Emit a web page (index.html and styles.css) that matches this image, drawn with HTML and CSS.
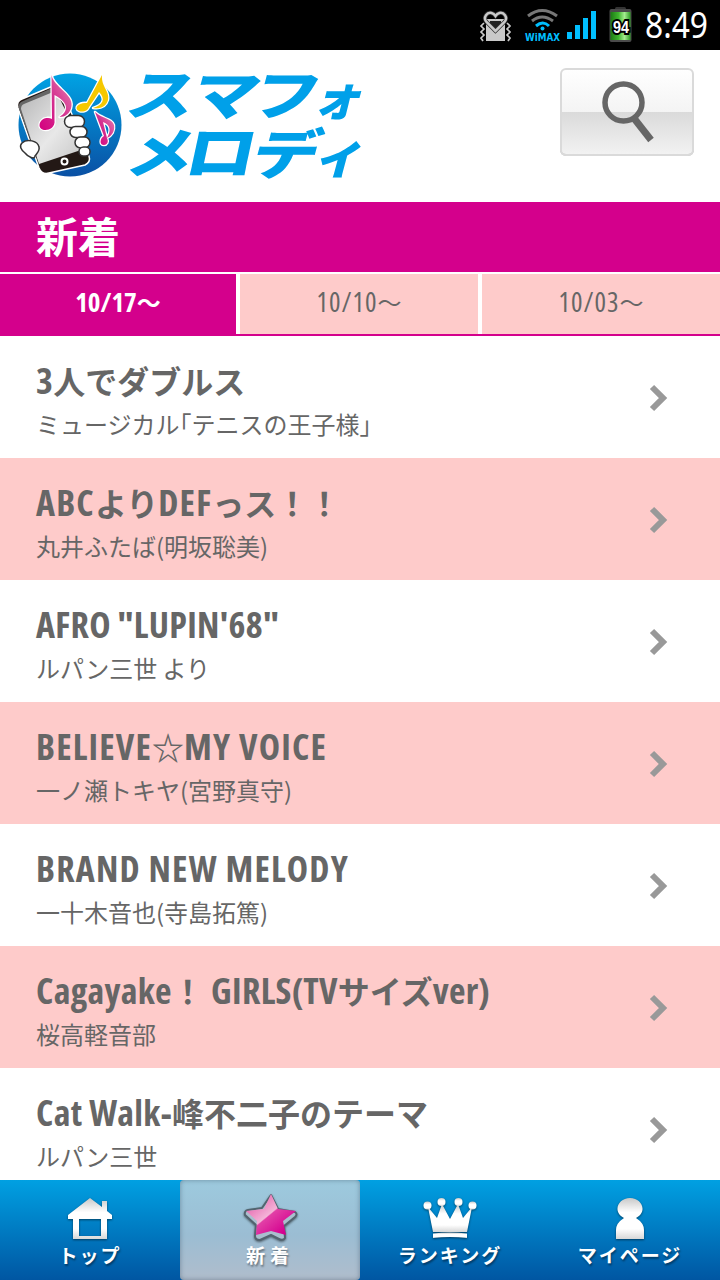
FILE: index.html
```
<!DOCTYPE html>
<html lang="ja">
<head>
  <meta charset="UTF-8" />
  <meta name="viewport" content="width=device-width, initial-scale=1.0" />
  <title>スマフォメロディ</title>
  <link rel="stylesheet" href="styles.css">
</head>
<body>
  <div class="status-bar">
    <svg width="250" height="50" viewBox="470 0 250 50">
      <!-- マナーモード -->
      <g fill="none" stroke="#c9c9c9" stroke-width="2">
        <path d="M487 19v21h17V19" fill="#c9c9c9"/>
        <path d="M490 21h11v7h-11z" fill="#222" stroke="none"/>
        <path d="M495.500 31l-9-9c-4-5 1-10 5-9 2 .5 3 1.500 4 3 1-1.500 2-2.500 4-3 4-1 9 4 5 9z" stroke="#333" stroke-width="4"/>
        <path d="M495.500 31l-9-9c-4-5 1-10 5-9 2 .5 3 1.500 4 3 1-1.500 2-2.500 4-3 4-1 9 4 5 9z" stroke-width="2.500"/>
        <path d="M484 23l-3 3 3 3-3 3 3 3-3 3 2 3M507 23l3 3-3 3 3 3-3 3 3 3-2 3" stroke-width="1.700"/>
      </g>
      <!-- WiMAX -->
      <g fill="none" stroke-width="3">
        <path d="M528 16q14-11 29 0M532 21q10-8 21 0" stroke="#777"/>
        <path d="M536 26q7-6 13 0" stroke="#00bfff"/>
        <circle cx="542.500" cy="28.500" r="2" fill="#00bfff" stroke="none"/>
      </g>
      <text class="wimax" x="525" y="41" textLength="35" lengthAdjust="spacingAndGlyphs">WiMAX</text>
      <path d="M567 32h5v7h-5zM575 25h5v14h-5zM583 18h5v21h-5zM591 11h5v28h-5z" fill="#00bfff"/>
      <!-- 電池 -->
      <defs>
        <linearGradient id="cell">
          <stop offset="0" stop-color="#1c7a14"/>
          <stop offset=".4" stop-color="#3fb52e"/>
          <stop offset=".7" stop-color="#a5ec90"/>
          <stop offset="1" stop-color="#2d9a22"/>
        </linearGradient>
      </defs>
      <rect x="615" y="7" width="11" height="4" rx="1.500" fill="#333"/>
      <rect x="609.500" y="9" width="22" height="33" rx="2" fill="#4a4a4a"/>
      <rect x="610.500" y="12" width="20" height="28" fill="url(#cell)"/>
      <text class="battery" x="613" y="32.500" textLength="16" lengthAdjust="spacingAndGlyphs">94</text>
      <text class="clock" x="645" y="38" textLength="63" lengthAdjust="spacingAndGlyphs">8:49</text>
    </svg>
  </div>

  <header class="header">
    <svg width="420" height="152" viewBox="0 50 420 152">
      <defs>
        <linearGradient id="globe" x1="0" y1="0" x2="0" y2="1">
          <stop offset="0" stop-color="#00a3e4"/>
          <stop offset="1" stop-color="#0a50a4"/>
        </linearGradient>
        <linearGradient id="screen" x1="0" y1="0" x2="1" y2="1">
          <stop offset="0" stop-color="#b5b5b6"/>
          <stop offset=".55" stop-color="#e8e8e8"/>
          <stop offset="1" stop-color="#c4c4c4"/>
        </linearGradient>
        <linearGradient id="note" x1="0" y1="1" x2="1" y2="0">
          <stop offset="0" stop-color="#d4007f"/>
          <stop offset=".5" stop-color="#d4308f"/>
          <stop offset="1" stop-color="#e889b5"/>
        </linearGradient>
      </defs>
      <circle cx="70" cy="125" r="51.500" fill="url(#globe)"/>
      <path d="M22 99l31-13q6-2 9 4l27 66q2 6-4 9l-36 8q-7 2-10-5L18 108q-2-7 4-9z" fill="#231815" stroke="#fff" stroke-width="1.500"/>
      <path d="M21 102l31-14q6-1 8 4L38 160 19 109q-1-5 2-7z" fill="#666"/>
      <path d="M24 104l29-12q3-1 5 3l26 54-45 15-18-55q0-4 3-5z" fill="url(#screen)"/>
      <circle cx="64.500" cy="161.500" r="3" fill="#231815" stroke="#fff" stroke-width="2"/>
      <g fill="#fff" stroke="#333" stroke-width="1.500">
        <path d="M22 143c5-5 16-2 17 4 1 4-2 6-4 9 0 4-7 1-10-3-4-3-6-7-3-10z"/>
        <rect x="64.500" y="115.500" width="20" height="12" rx="6"/>
        <rect x="70" y="126.500" width="17" height="11" rx="5.500"/>
        <rect x="75" y="137" width="15" height="11" rx="5.500"/>
        <rect x="79" y="147" width="11" height="9" rx="4.500"/>
      </g>
      <g stroke="#fff" stroke-width="2.500" stroke-linejoin="round" paint-order="stroke" fill-rule="evenodd">
        <path d="M51.500 75c2 12 22 19 20 31-1 8-7 11-12 11 9-6 10-14-5-22v25c1 7-5 10-9 10-9 0-7-11 1-12q3-.5 5.500 1z" fill="url(#note)"/>
        <path d="M102 75c-1 12 8 16 6 25-2 7-8 9-15 8 10-3 13-9 6-16l-10 15c-2 5-7 5-10 4-6-3 0-9 8-8z" fill="#f5c800"/>
        <path d="M95 112c7 7 17 6 19 13 1 6-2 11-7 13 4-7 4-13-4-16l4 16c2 4 0 7-3 7-5 0-4-7 0-9z" fill="url(#note)"/>
      </g>
      <g class="logo-text">
        <text transform="translate(123.500 114.500) skewX(-15) scale(1.240 1)">ス</text>
        <text transform="translate(187 115) skewX(-15) scale(1.240 1)">マ</text>
        <text transform="translate(248 115) skewX(-15) scale(1.240 1)">フ</text>
        <text transform="translate(311 114.500) skewX(-15) scale(.93 .9)">ォ</text>
        <text transform="translate(123 173) skewX(-15) scale(1.240 1)">メ</text>
        <text transform="translate(182 173.500) skewX(-12) scale(1.300 1.080)">ロ</text>
        <text transform="translate(248 173.500) skewX(-15) scale(1.240 1)">デ</text>
        <text transform="translate(312 173) skewX(-15) scale(.93 .9)">ィ</text>
      </g>
    </svg>
    <button class="search">
      <svg width="134" height="88" viewBox="560 68 134 88">
        <circle cx="623.500" cy="102.500" r="18.500" fill="none" stroke="#666" stroke-width="5.500"/>
        <path d="M633 117l18 23" stroke="#666" stroke-width="7"/>
      </svg>
    </button>
  </header>

  <h1 class="heading">新着</h1>

  <div class="tabs">
    <a class="tab active"><span>10/17</span>～</a>
    <a class="tab"><span>10/10</span>～</a>
    <a class="tab"><span>10/03</span>～</a>
  </div>

  <ul class="list">
    <li>
      <h2><span class="en">3</span>人でダブルス</h2>
      <p>ミュージカル｢テニスの王子様｣</p>
      <svg class="arrow" viewBox="0 0 20 28"><path d="M3 3l11 11L3 25"/></svg>
    </li>
    <li>
      <h2><span class="en wide">ABC</span>より<span class="en wide">DEF</span>っス！！</h2>
      <p>丸井ふたば(明坂聡美)</p>
      <svg class="arrow" viewBox="0 0 20 28"><path d="M3 3l11 11L3 25"/></svg>
    </li>
    <li>
      <h2><span class="en">AFRO "LUPIN'68"</span></h2>
      <p>ルパン三世 より</p>
      <svg class="arrow" viewBox="0 0 20 28"><path d="M3 3l11 11L3 25"/></svg>
    </li>
    <li>
      <h2><span class="en wide">BELIEVE</span>☆<span class="en wide">MY VOICE</span></h2>
      <p>一ノ瀬トキヤ(宮野真守)</p>
      <svg class="arrow" viewBox="0 0 20 28"><path d="M3 3l11 11L3 25"/></svg>
    </li>
    <li>
      <h2><span class="en wide">BRAND NEW MELODY</span></h2>
      <p>一十木音也(寺島拓篤)</p>
      <svg class="arrow" viewBox="0 0 20 28"><path d="M3 3l11 11L3 25"/></svg>
    </li>
    <li>
      <h2><span class="en">Cagayake</span>！ <span class="en">GIRLS(TV</span>サイズ<span class="en">ver)</span></h2>
      <p>桜高軽音部</p>
      <svg class="arrow" viewBox="0 0 20 28"><path d="M3 3l11 11L3 25"/></svg>
    </li>
    <li>
      <h2><span class="en">Cat Walk-</span>峰不二子のテーマ</h2>
      <p>ルパン三世</p>
      <svg class="arrow" viewBox="0 0 20 28"><path d="M3 3l11 11L3 25"/></svg>
    </li>
  </ul>

  <nav class="nav">
    <svg class="defs" width="0" height="0">
      <linearGradient id="silver" x1="0" y1="0" x2="0" y2="1">
        <stop offset="0" stop-color="#c8c8c8"/>
        <stop offset=".35" stop-color="#fff"/>
        <stop offset=".75" stop-color="#fff"/>
        <stop offset="1" stop-color="#d8d8d8"/>
      </linearGradient>
      <linearGradient id="pink" x1="0" y1="0" x2="1" y2="1">
        <stop offset=".1" stop-color="#e45aa8"/>
        <stop offset=".48" stop-color="#f4b4d8"/>
        <stop offset=".5" stop-color="#e23fa6"/>
        <stop offset=".85" stop-color="#d4008f"/>
      </linearGradient>
    </svg>
    <a>
      <svg class="icon" viewBox="0 0 60 48"><path d="M30 4L8 21v4h5v20h34V25h5v-4l-5-4V7h-5v6zM19 25h22v17H19z" fill="url(#silver)" fill-rule="evenodd"/></svg>
      <span>トップ</span>
    </a>
    <a class="current">
      <svg class="icon" viewBox="0 0 60 48">
        <path d="M31 1l7 14 17 3q3 2 0 5l-11 9 1 12q-2 3-6 1l-8-4-11 5q-5 0-5-4l1-11L5 21q-1-4 3-5l14-2z" fill="#a9bfce" stroke="#52646f" stroke-width="2" stroke-linejoin="round"/>
        <path d="M31 0l7 15 18 2-13 10 3 14-15-4-15 4 1-14L6 17l18-2z" fill="url(#pink)"/>
      </svg>
      <span>新着</span>
    </a>
    <a>
      <svg class="icon" viewBox="0 0 60 48">
        <g fill="url(#silver)">
          <path d="M8 13l9 11 5-14 8 15 8-15 5 14 9-11-5 25H13z"/>
          <circle cx="7.500" cy="11.500" r="4"/><circle cx="21.500" cy="8" r="4"/><circle cx="38.500" cy="8" r="4"/><circle cx="52.500" cy="11.500" r="4"/>
          <path d="M13 39.500q17-2 34 0V44q-17-2-34 0z"/>
        </g>
      </svg>
      <span>ランキング</span>
    </a>
    <a>
      <svg class="icon" viewBox="0 0 60 48"><path d="M24 24C12 18 18 4 30 4s18 14 6 20q8 5 8 12v9H16v-9q0-7 8-12z" fill="url(#silver)"/></svg>
      <span>マイページ</span>
    </a>
  </nav>
</body>
</html>
```
FILE: styles.css
```
* {
  box-sizing: border-box;
}

body {
  margin: 0;
  height: 1280px;
  display: flex;
  flex-direction: column;
  overflow: hidden;
  background: #fff;
  color: #666;
  font-family: "Noto Sans CJK JP", sans-serif;
}

svg {
  display: block;
}

.status-bar {
  flex: none;
  height: 50px;
  background: #000;
  display: flex;
  justify-content: flex-end;
}

.wimax {
  font: bold 11px "DejaVu Sans", sans-serif;
  fill: #00bfff;
}

.battery {
  font: bold 17px "Liberation Sans", sans-serif;
  fill: #fff;
  stroke: #000;
  stroke-width: 4px;
  paint-order: stroke;
}

.clock {
  font: 36px "Noto Sans", sans-serif;
  fill: #fff;
}

.header {
  flex: none;
  height: 152px;
  display: flex;
  justify-content: space-between;
  padding-right: 26px;
}

.logo-text {
  font-size: 54px;
  font-weight: 900;
  fill: #00a0e9;
}

.search {
  width: 134px;
  height: 88px;
  margin: 18px 0 0;
  padding: 0;
  border: 0;
  border-radius: 6px;
  box-shadow: inset 0 0 0 2px #dadada, inset 0 -2px 0 #c8c8c8;
  background: linear-gradient(#fff, #f4f4f4 50%, #dadada 50%, #f3f3f3);
}

.heading {
  flex: none;
  height: 70px;
  margin: 0 0 2px;
  padding-left: 36px;
  background: #d4008c;
  color: #fff;
  font-size: 42px;
  font-weight: 700;
  line-height: 66px;
}

.tabs {
  flex: none;
  height: 62px;
  display: grid;
  grid-template-columns: 236px 238px 238px;
  gap: 4px;
  border-bottom: 2px solid #d4008c;
}

.tab {
  background: #fecbca;
  font-size: 24px;
  line-height: 56px;
  text-align: center;
  white-space: nowrap;
}

.tab span {
  font-family: "Open Sans", sans-serif;
  font-size: 27px;
  font-stretch: 75%;
  letter-spacing: 1px;
}

.tab.active {
  background: #d4008c;
  color: #fff;
  font-weight: 700;
}

.tab.active span {
  letter-spacing: 0;
}

.list {
  flex: 1;
  min-height: 0;
  margin: 0;
  padding: 0;
  list-style: none;
  overflow: hidden;
}

.list li {
  position: relative;
  height: 122px;
  padding: 20px 0 0 36px;
}

.list li:nth-child(even) {
  background: #fecbca;
}

.list h2 {
  margin: 0;
  height: 50px;
  font-size: 32px;
  font-weight: 700;
  line-height: 48px;
  white-space: nowrap;
}

.list .en {
  font-family: "Open Sans", sans-serif;
  font-size: 36px;
  font-weight: 700;
  font-stretch: 75%;
  letter-spacing: 0.3px;
}

.list .wide {
  letter-spacing: 1.2px;
}

.list p {
  margin: 0;
  font-size: 24px;
  line-height: 35px;
}

.arrow {
  position: absolute;
  top: 48px;
  right: 51px;
  width: 20px;
  height: 28px;
  fill: none;
  stroke: #999;
  stroke-width: 6px;
}

.nav {
  flex: none;
  height: 100px;
  display: grid;
  grid-template-columns: repeat(4, 1fr);
  background: linear-gradient(#00a0e2, #0056a2);
}

.nav .defs {
  position: absolute;
}

.nav a {
  display: flex;
  flex-direction: column;
  align-items: center;
  padding-top: 14px;
  color: #fff;
  font-size: 19px;
  font-weight: 700;
  line-height: 26px;
  letter-spacing: 2px;
  text-shadow: 1px 2px 2px rgba(0, 0, 0, 0.4);
}

.nav .current {
  background: linear-gradient(#9dcade, #9bbdd3 55%, #b0bdcc);
  box-shadow: inset 0 0 5px rgba(60, 80, 100, 0.5);
  border-radius: 4px;
  letter-spacing: 5px;
}

.icon {
  width: 60px;
  height: 48px;
  filter: drop-shadow(0 1px 1px rgba(0, 0, 0, 0.5));
}
```
